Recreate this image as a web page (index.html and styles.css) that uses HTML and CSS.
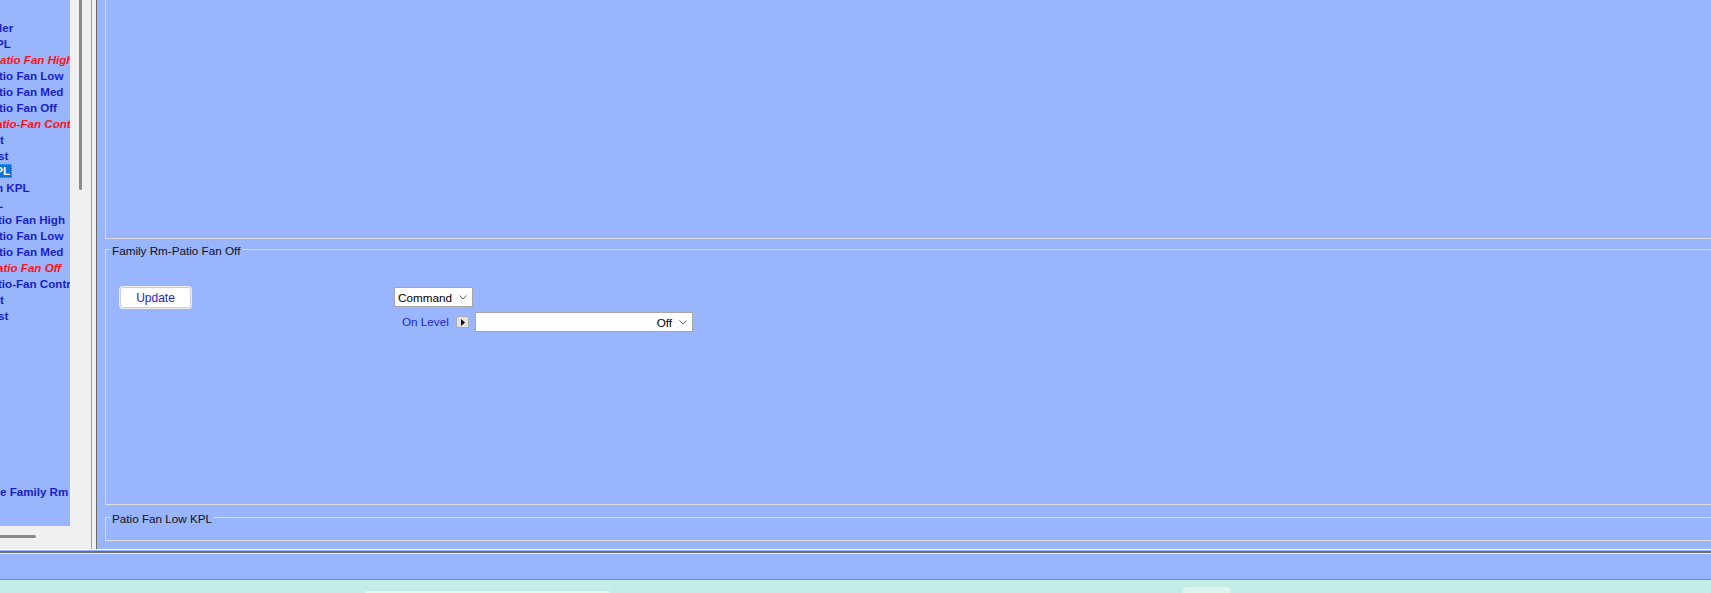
FILE: index.html
```html
<!DOCTYPE html>
<html>
<head>
<meta charset="utf-8">
<link rel="stylesheet" href="styles.css">
</head>
<body>
<div class="app">
  <div class="workspace">
    <div class="tree-panel">
      <div class="tree">
        <div class="row o1">ler</div>
        <div class="row o4">PL</div>
        <div class="row warn">atio Fan High</div>
        <div class="row o1">tio Fan Low</div>
        <div class="row o1">tio Fan Med</div>
        <div class="row o1">tio Fan Off</div>
        <div class="row warn o4">atio-Fan Control</div>
        <div class="row">t</div>
        <div class="row o2">st</div>
        <div class="row o15"><span class="sel">KPL</span></div>
        <div class="row o4">n KPL</div>
        <div class="row o4">L</div>
        <div class="row o2">tio Fan High</div>
        <div class="row o1">tio Fan Low</div>
        <div class="row o1">tio Fan Med</div>
        <div class="row warn o3">atio Fan Off</div>
        <div class="row o2">tio-Fan Control</div>
        <div class="row">t</div>
        <div class="row o2">st</div>
        <div class="row"></div>
        <div class="row"></div>
        <div class="row"></div>
        <div class="row"></div>
        <div class="row"></div>
        <div class="row"></div>
        <div class="row"></div>
        <div class="row"></div>
        <div class="row"></div>
        <div class="row"></div>
        <div class="row">e Family Rm</div>
      </div>
      <div class="vscroll"><div class="vthumb"></div></div>
      <div class="hscroll"><div class="hthumb"></div></div>
      <div class="corner"></div>
    </div>
    <div class="splitter"></div>
    <div class="main">
      <fieldset class="fs fs-top"></fieldset>
      <fieldset class="fs fs-cmd">
        <legend>Family Rm-Patio Fan Off</legend>
        <div class="cmd-body">
          <div class="cmd-left"><button class="btn-update">Update</button></div>
          <div class="cmd-form">
            <div class="select sel-command">
              <span>Command</span>
              <svg class="chev" width="8" height="5" viewBox="0 0 8 5"><polyline points="0.5,0.5 4,4 7.5,0.5" fill="none" stroke="#606060" stroke-width="1"/></svg>
            </div>
            <div class="level-row">
              <span class="level-label">On Level</span>
              <button class="btn-arrow"><svg width="4" height="7" viewBox="0 0 4 7"><polygon points="0,0 4,3.5 0,7" fill="#000"/></svg></button>
              <div class="select sel-level">
                <span>Off</span>
                <svg class="chev" width="8" height="5" viewBox="0 0 8 5"><polyline points="0.5,0.5 4,4 7.5,0.5" fill="none" stroke="#606060" stroke-width="1"/></svg>
              </div>
            </div>
          </div>
        </div>
      </fieldset>
      <fieldset class="fs fs-kpl">
        <legend>Patio Fan Low KPL</legend>
        <div class="kpl-body"></div>
      </fieldset>
    </div>
  </div>
  <div class="sep"></div>
  <div class="status"></div>
  <div class="taskbar">
    <div class="tb-search"></div>
    <div class="tb-icon"></div>
  </div>
</div>
</body>
</html>
```
FILE: styles.css
```css
html, body {
  margin: 0;
  padding: 0;
}
body {
  width: 1711px;
  height: 593px;
  overflow: hidden;
  background: #98b5fe;
  font-family: "Liberation Sans", Arial, sans-serif;
}
.app {
  display: flex;
  flex-direction: column;
  height: 593px;
}
.workspace {
  display: flex;
  height: 549px;
  flex: none;
}

/* tree panel */
.tree-panel {
  width: 91px;
  flex: none;
  display: grid;
  grid-template-columns: 70px 21px;
  grid-template-rows: 526px 23px;
  background: #f0f0f0;
}
.tree {
  background: #98b5fe;
  overflow: hidden;
  padding-top: 20px;
  box-sizing: border-box;
  font-weight: bold;
  font-size: 11.6px;
  color: #1a1fc4;
  white-space: nowrap;
}
.row {
  height: 16px;
  line-height: 16px;
}
.warn {
  color: #ff1414;
  font-style: italic;
}
.o1 { text-indent: -1px; }
.o2 { text-indent: -2px; }
.o3 { text-indent: -3px; }
.o4 { text-indent: -4px; }
.o15 { text-indent: -15px; }
.sel {
  display: inline-block;
  text-indent: 0;
  line-height: 12px;
  padding: 0 1px;
  border: 1px dotted #c8962e;
  background: #0a72d8;
  color: #fff;
  vertical-align: 1px;
}
.vscroll {
  padding-left: 9px;
}
.vthumb {
  width: 3px;
  height: 190px;
  background: #8a8a8a;
  border-radius: 0 0 2px 2px;
}
.hscroll {
  padding-top: 9px;
}
.hthumb {
  width: 36px;
  height: 3px;
  background: #8a8a8a;
  border-radius: 0 2px 2px 0;
}

.splitter {
  width: 6px;
  flex: none;
  box-sizing: border-box;
  border-left: 1px solid #a0a0a0;
  border-right: 1px solid #696969;
  background: #f0f0f0;
}

/* main area */
.main {
  flex: 1;
  min-width: 0;
  display: flex;
  flex-direction: column;
  padding-left: 8px;
  overflow: hidden;
}
.fs {
  box-sizing: content-box;
  margin: 0;
  min-width: 0;
  padding: 0 0 0 4px;
  border: 1px solid #dcdcdc;
  border-right: none;
}
.fs legend {
  padding: 3px 2px 0;
  font-size: 11.7px;
  line-height: 14px;
  color: #101018;
}
.fs-top {
  border-top: none;
  height: 238px;
  padding: 0;
  flex: none;
}
.fs-cmd {
  margin-top: 2px;
  flex: none;
}
.cmd-body {
  height: 246px;
  display: flex;
  font-size: 11.7px;
}
.cmd-left {
  width: 284px;
  flex: none;
}
.btn-update {
  box-sizing: border-box;
  width: 71px;
  height: 21px;
  margin: 29px 0 0 10px;
  padding: 0;
  border: 1px solid #cfcfcf;
  border-radius: 3px;
  background: #fff;
  box-shadow: 0 0 0 1px #ececec;
  font-family: inherit;
  font-size: 12px;
  color: #2323c8;
}
.cmd-form {
  margin-top: 29px;
  display: flex;
  flex-direction: column;
  gap: 5px;
}
.select {
  box-sizing: border-box;
  height: 20px;
  display: flex;
  align-items: center;
  background: #fff;
  border: 1px solid #a6a6a6;
  color: #000;
}
.sel-command {
  width: 79px;
  padding-left: 3px;
}
.sel-command .chev {
  margin-left: auto;
  margin-right: 5px;
}
.level-row {
  display: flex;
  align-items: center;
  margin-left: 8px;
}
.level-label {
  width: 54px;
  color: #1a2ac8;
  line-height: 20px;
}
.btn-arrow {
  box-sizing: border-box;
  width: 13px;
  height: 12px;
  padding: 0;
  margin: 0 6px 0 0;
  border: 1px solid #adadad;
  border-radius: 2px;
  background: #e3e3e3;
  display: flex;
  align-items: center;
  justify-content: center;
}
.sel-level {
  width: 218px;
  justify-content: flex-end;
}
.sel-level .chev {
  margin: 0 5px 0 7px;
}
.fs-kpl {
  margin-top: 4px;
  flex: none;
}
.kpl-body {
  height: 14px;
}

/* bottom bars */
.sep {
  height: 5px;
  flex: none;
  box-sizing: border-box;
  border-top: 1px solid #ffffff;
  background: linear-gradient(to bottom, #98b5fe 0 1px, #6e6e6e 1px 3px, #e6eeff 3px 4px);
}
.status {
  height: 25px;
  flex: none;
}
.taskbar {
  flex: 1;
  border-top: 1px solid #6f8cbf;
  background: #c5ede7;
  display: flex;
  align-items: flex-end;
}
.tb-search {
  margin-left: 365px;
  width: 245px;
  height: 2px;
  background: #e4f7f3;
  border-radius: 6px 6px 0 0;
}
.tb-icon {
  margin-left: 573px;
  width: 48px;
  height: 6px;
  background: #dcf4f0;
  border-radius: 4px 4px 0 0;
}
```
